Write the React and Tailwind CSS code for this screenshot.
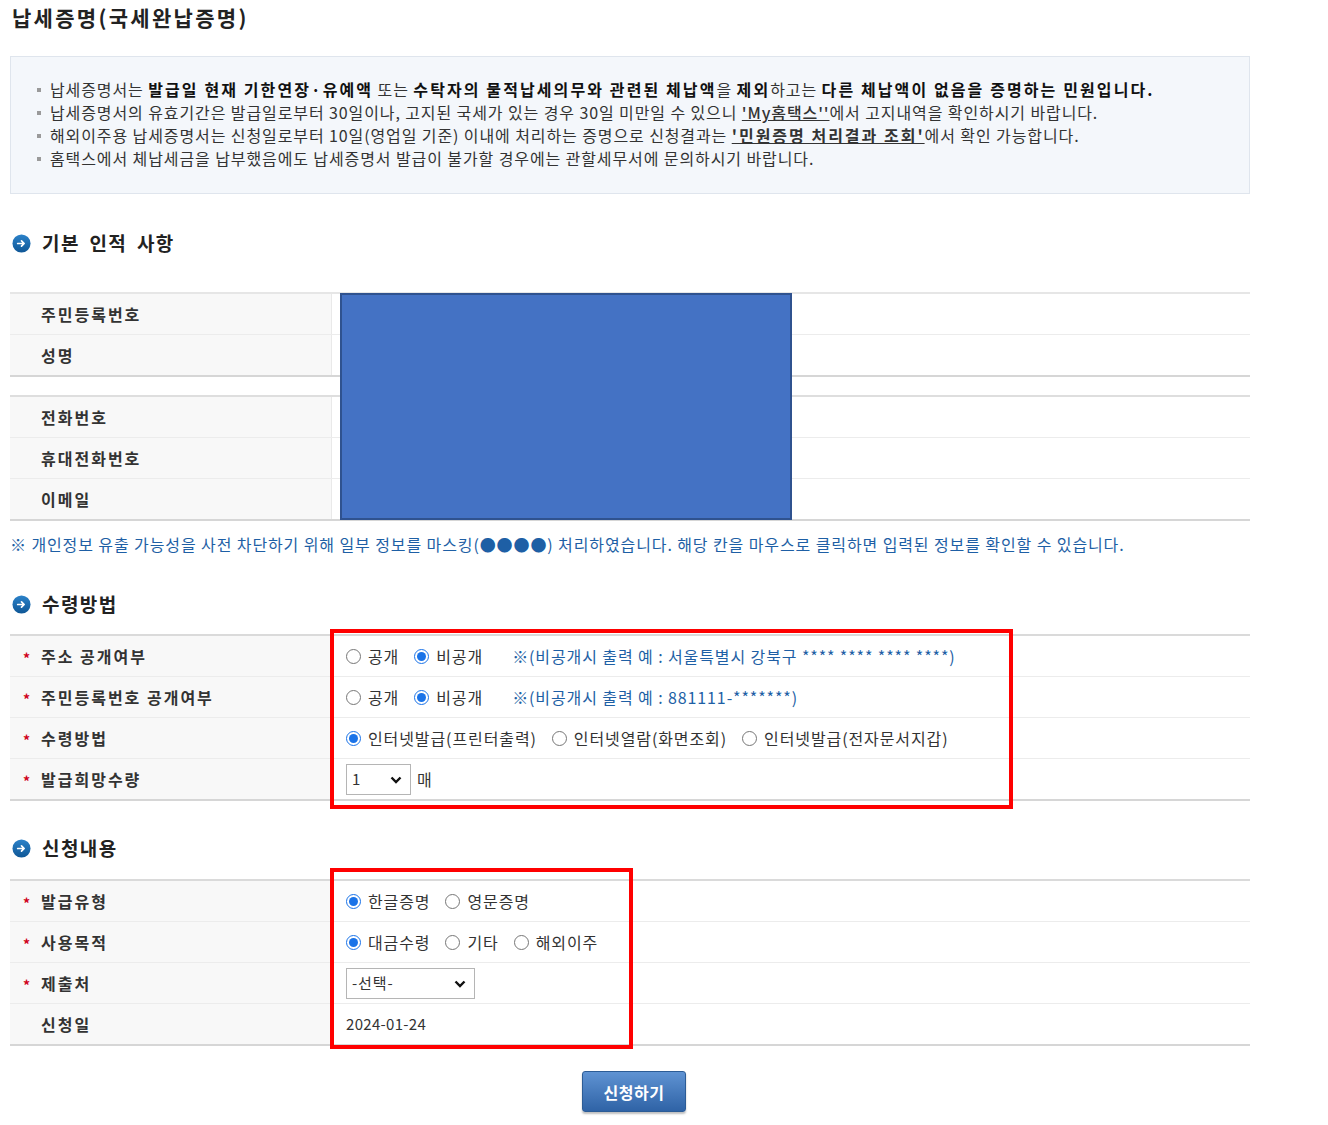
import React from "react";

const FONT = { fontFamily: '"Noto Sans CJK KR", "Noto Sans", sans-serif' };

function SectionTitle({ children, className }) {
    return (
        <div className={`flex items-center h-[30px] pl-[2px] gap-[11px] ${className}`}>
            <svg width="19" height="19" viewBox="0 0 20 20">
                <defs>
                    <linearGradient id="dot" x1="0" y1="0" x2="0" y2="1">
                        <stop offset="0" stopColor="#2c82c9" />
                        <stop offset="1" stopColor="#0f5796" />
                    </linearGradient>
                </defs>
                <circle cx="10" cy="10" r="9.5" fill="url(#dot)" />
                <path d="M6 10h6.5M10 7.2l2.8 2.8-2.8 2.8" stroke="#fff" strokeWidth="1.8" fill="none" strokeLinecap="round" strokeLinejoin="round" />
            </svg>
            <h2 className="text-[19px] font-bold text-[#222] tracking-[1.4px] [word-spacing:4px]">{children}</h2>
        </div>
    );
}

function Row({ label, star, last, children }) {
    return (
        <div className={`flex ${last ? "h-[40px]" : "h-[41px] border-b border-[#ececec]"}`}>
            <div className="w-[322px] bg-[#f8f8f8] border-r border-[#e9e9e9] flex items-center pl-[13px]">
                <span className="w-[18px] text-[#d0021b] text-[14px] font-bold leading-none pt-[3px]">{star ? "*" : ""}</span>
                <span className="text-[16px] font-bold text-[#333] tracking-[2px]">{label}</span>
            </div>
            <div className="flex-1 flex items-center pl-[12px] text-[16px] text-[#333] tracking-[0.9px]">{children}</div>
        </div>
    );
}

function Radio({ name, label, checked }) {
    return (
        <label className="flex items-center gap-[7px] mr-[13px]">
            <input type="radio" name={name} defaultChecked={checked} className="w-[15px] h-[15px] m-0 ml-[2px] accent-[#1a73e8]" />
            <span>{label}</span>
        </label>
    );
}

function Select({ value, width }) {
    return (
        <div className={`relative h-[31px] border border-[#b5b5b5] bg-white flex items-center ${width}`}>
            <select defaultValue={value} className="appearance-none w-full h-full pl-[5px] text-[15px] text-[#333] bg-transparent outline-none">
                <option>{value}</option>
            </select>
            <svg className="absolute right-[8px] top-[11px] pointer-events-none" width="12" height="8" viewBox="0 0 12 8">
                <path d="M1.5 1.5l4.5 4.5 4.5-4.5" stroke="#111" strokeWidth="2.4" fill="none" />
            </svg>
        </div>
    );
}

function Bullet() {
    return <span className="inline-block w-[4px] h-[4px] bg-[#9a9a9a] mr-[9px] align-middle mb-[3px]" />;
}

function B({ children }) {
    return <b className="text-[#111] tracking-[2.1px]">{children}</b>;
}

export default function App() {
    return (
        <div className="bg-white min-h-[1125px] text-[#333]" style={FONT}>
            <div className="w-[1240px] ml-[10px]">
                <h1 className="h-[34px] leading-[34px] text-[21px] font-semibold text-[#222] pl-[2px] tracking-[2.3px]">
                    납세증명(국세완납증명)
                </h1>

                <div className="mt-[22px] border border-[#dfe5ed] bg-[#f4f7fb] pl-[26px] pt-[21px] pb-[23px] text-[16px] leading-[23px] text-[#333] tracking-[0.9px] whitespace-nowrap">
                    <p>
                        <Bullet />납세증명서는 <B>발급일 현재 기한연장·유예액</B> 또는 <B>수탁자의 물적납세의무와 관련된 체납액</B>을 <B>제외</B>하고는 <B>다른 체납액이 없음을 증명하는 민원입니다.</B>
                    </p>
                    <p>
                        <Bullet />납세증명서의 유효기간은 발급일로부터 30일이나, 고지된 국세가 있는 경우 30일 미만일 수 있으니 <a href="#" className="underline font-medium text-[#333]">'My홈택스''</a>에서 고지내역을 확인하시기 바랍니다.
                    </p>
                    <p>
                        <Bullet />해외이주용 납세증명서는 신청일로부터 10일(영업일 기준) 이내에 처리하는 증명으로 신청결과는 <a href="#" className="underline font-bold text-[#333] tracking-[2px]">'민원증명 처리결과 조회'</a>에서 확인 가능합니다.
                    </p>
                    <p>
                        <Bullet />홈택스에서 체납세금을 납부했음에도 납세증명서 발급이 불가할 경우에는 관할세무서에 문의하시기 바랍니다.
                    </p>
                </div>

                <SectionTitle className="mt-[34px]">기본 인적 사항</SectionTitle>

                <div className="relative mt-[34px]">
                    <div className="border-t-2 border-b-2 border-t-[#e6e6e6] border-b-[#d6d6d6]">
                        <Row label="주민등록번호" />
                        <Row label="성명" last />
                    </div>
                    <div className="mt-[18px] border-t-2 border-b-2 border-t-[#dedede] border-b-[#d6d6d6]">
                        <Row label="전화번호" />
                        <Row label="휴대전화번호" />
                        <Row label="이메일" last />
                    </div>
                    {/* masked area */}
                    <div className="absolute top-[1px] left-[330px] w-[452px] h-[227px] bg-[#4472c4] border-2 border-[#2f528f]" />
                </div>

                <p className="mt-[13px] leading-[20px] text-[16px] text-[#1e5fa5] tracking-[0.9px] whitespace-nowrap">
                    ※ 개인정보 유출 가능성을 사전 차단하기 위해 일부 정보를 마스킹(●●●●) 처리하였습니다. 해당 칸을 마우스로 클릭하면 입력된 정보를 확인할 수 있습니다.
                </p>

                <SectionTitle className="mt-[35px]">수령방법</SectionTitle>

                <div className="relative mt-[15px] border-t-2 border-b-2 border-t-[#dadada] border-b-[#d6d6d6]">
                    <Row label="주소 공개여부" star>
                        <Radio name="addr" label="공개" />
                        <Radio name="addr" label="비공개" checked />
                        <span className="ml-[16px] text-[#1e5fa5]">※(비공개시 출력 예 : 서울특별시 강북구 **** **** **** ****)</span>
                    </Row>
                    <Row label="주민등록번호 공개여부" star>
                        <Radio name="rrn" label="공개" />
                        <Radio name="rrn" label="비공개" checked />
                        <span className="ml-[16px] text-[#1e5fa5]">※(비공개시 출력 예 : 881111-*******)</span>
                    </Row>
                    <Row label="수령방법" star>
                        <Radio name="recv" label="인터넷발급(프린터출력)" checked />
                        <Radio name="recv" label="인터넷열람(화면조회)" />
                        <Radio name="recv" label="인터넷발급(전자문서지갑)" />
                    </Row>
                    <Row label="발급희망수량" star last>
                        <Select value="1" width="w-[65px] ml-[2px]" />
                        <span className="ml-[6px]">매</span>
                    </Row>
                    <div className="absolute top-[-7px] left-[320px] w-[683px] h-[180px] border-4 border-[#ff0000] pointer-events-none" />
                </div>

                <SectionTitle className="mt-[32px]">신청내용</SectionTitle>

                <div className="relative mt-[16px] border-t-2 border-b-2 border-t-[#dadada] border-b-[#d6d6d6]">
                    <Row label="발급유형" star>
                        <Radio name="kind" label="한글증명" checked />
                        <Radio name="kind" label="영문증명" />
                    </Row>
                    <Row label="사용목적" star>
                        <Radio name="use" label="대금수령" checked />
                        <Radio name="use" label="기타" />
                        <Radio name="use" label="해외이주" />
                    </Row>
                    <Row label="제출처" star>
                        <Select value="-선택-" width="w-[129px] ml-[2px]" />
                    </Row>
                    <Row label="신청일" last>
                        <span className="ml-[2px] tracking-[0.3px] text-[15px]">2024-01-24</span>
                    </Row>
                    <div className="absolute top-[-13px] left-[320px] w-[303px] h-[181px] border-4 border-[#ff0000] pointer-events-none" />
                </div>

                <div className="mt-[25px] flex justify-center pl-[8px]">
                    <button className="w-[104px] h-[41px] rounded-[3px] border border-[#2c5c96] bg-gradient-to-b from-[#5f93d3] to-[#2f63a6] text-white text-[16px] font-bold shadow-[0_2px_2px_rgba(0,0,0,0.25)] tracking-[0.5px]">
                        신청하기
                    </button>
                </div>
            </div>
        </div>
    );
}
